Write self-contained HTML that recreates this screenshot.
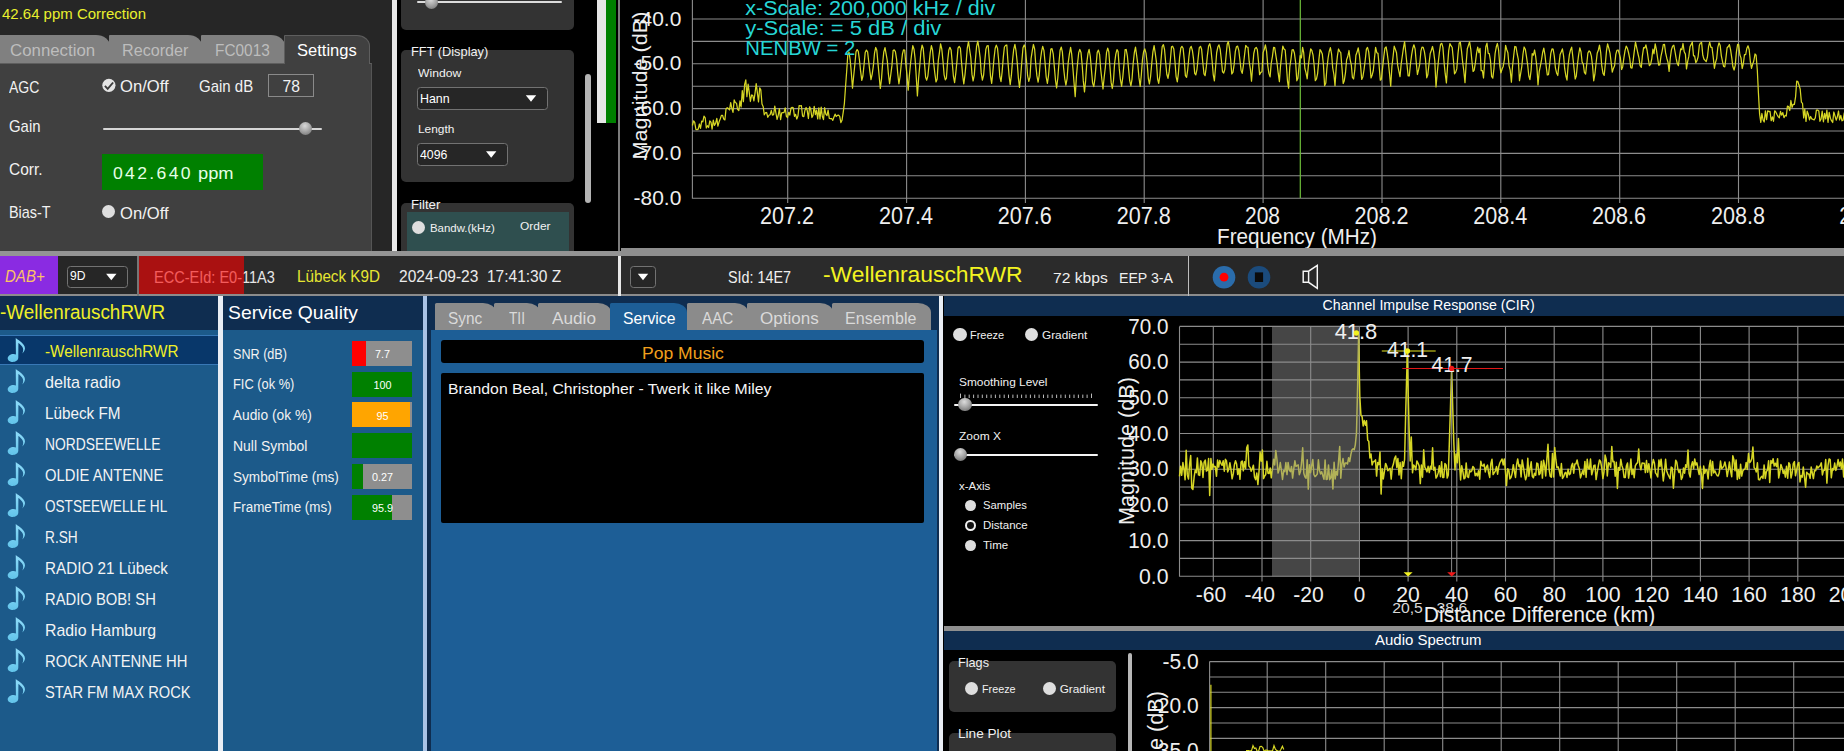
<!DOCTYPE html>
<html lang="en"><head><meta charset="utf-8"><title>DAB Receiver</title>
<style>
html,body{margin:0;padding:0;background:#000;overflow:hidden;}
html{width:1844px;height:751px;}
body{width:1844px;height:751px;position:relative;overflow:hidden;font-family:"Liberation Sans",sans-serif;}
.b{position:absolute;box-sizing:border-box;}
.t{position:absolute;white-space:nowrap;line-height:1;transform-origin:0 0;display:block;}
svg{position:absolute;left:0;top:0;overflow:hidden;}
svg text{font-family:"Liberation Sans",sans-serif;}
.rd{position:absolute;border-radius:50%;background:#dedede;}
.tab{position:absolute;box-sizing:border-box;}
</style></head><body>
<div class="b" style="left:0.00px;top:0.00px;width:392.30px;height:251.00px;background:#262626;"></div>
<span class="t" style="left:2.00px;top:6.77px;font-size:14.8px;color:#e9f02e;transform:scaleX(1.0118);">42.64 ppm Correction</span>
<div class="tab" style="left:-4px;top:35px;width:113.9px;height:28px;background:#808080;border-radius:1px 14px 0 0 / 1px 11px 0 0;"></div>
<div class="tab" style="left:108.7px;top:35px;width:93.3px;height:28px;background:#808080;border-radius:1px 14px 0 0 / 1px 11px 0 0;"></div>
<div class="tab" style="left:200.8px;top:35px;width:84.4px;height:28px;background:#808080;border-radius:1px 14px 0 0 / 1px 11px 0 0;"></div>
<div class="b" style="left:0.00px;top:63.00px;width:372.00px;height:188.00px;background:#404040;border-top:1px solid #5e5e5e;border-right:1px solid #555;"></div>
<div class="tab" style="left:284px;top:35px;width:86px;height:29px;background:#404040;border:1px solid #5e5e5e;border-bottom:none;border-radius:1px 13px 0 0 / 1px 11px 0 0;"></div>
<span class="t" style="left:9.80px;top:43.35px;font-size:16.6px;color:#bdbdbd;transform:scaleX(1.0145);">Connection</span>
<span class="t" style="left:121.90px;top:43.35px;font-size:16.6px;color:#bdbdbd;transform:scaleX(0.9726);">Recorder</span>
<span class="t" style="left:214.80px;top:43.35px;font-size:16.6px;color:#bdbdbd;transform:scaleX(0.9279);">FC0013</span>
<span class="t" style="left:296.50px;top:43.35px;font-size:16.6px;color:#fff;transform:scaleX(0.9953);">Settings</span>
<span class="t" style="left:8.70px;top:80.21px;font-size:15.7px;color:#f2f2f2;transform:scaleX(0.8935);">AGC</span>
<svg width="130" height="110" viewBox="0 0 130 110"><circle cx="108.9" cy="85.3" r="6.6" fill="#e4e4e4"/><path d="M104.9 85.9 L107.7 88.9 L113.1 82.5" fill="none" stroke="#3c3c3c" stroke-width="1.9"/></svg>
<span class="t" style="left:120.20px;top:78.91px;font-size:15.7px;color:#f2f2f2;transform:scaleX(1.0574);">On/Off</span>
<span class="t" style="left:198.50px;top:78.91px;font-size:15.7px;color:#f2f2f2;transform:scaleX(0.9554);">Gain dB</span>
<div class="b" style="left:268.30px;top:74.20px;width:45.60px;height:23.00px;background:#404040;border:1px solid #8a8a8a;"></div>
<span class="t" style="left:282.47px;top:78.91px;font-size:15.7px;color:#f2f2f2;">78</span>
<span class="t" style="left:8.70px;top:119.41px;font-size:15.7px;color:#f2f2f2;transform:scaleX(0.9498);">Gain</span>
<div class="b" style="left:103.00px;top:127.70px;width:219.00px;height:2.10px;background:#d6d6d6;border-radius:1px;"></div>
<div class="b" style="left:299.4px;top:122.2px;width:13px;height:13px;border-radius:50%;background:radial-gradient(circle at 45% 30%,#d8d8d8 0%,#a8a8a8 45%,#6a6a6a 100%);"></div>
<span class="t" style="left:8.70px;top:161.61px;font-size:15.7px;color:#f2f2f2;transform:scaleX(0.9876);">Corr.</span>
<div class="b" style="left:102.00px;top:153.80px;width:161.10px;height:35.80px;background:#008000;"></div>
<span class="t" style="left:113.30px;top:164.87px;font-size:17.4px;color:#e6ffe6;transform:scaleX(1.0114);letter-spacing:2.3px;">042.640</span>
<span class="t" style="left:198.30px;top:164.87px;font-size:17.4px;color:#e6ffe6;transform:scaleX(1.0517);">ppm</span>
<span class="t" style="left:8.70px;top:204.61px;font-size:15.7px;color:#f2f2f2;transform:scaleX(0.9171);">Bias-T</span>
<div class="rd" style="left:102px;top:205.2px;width:13px;height:13px;"></div>
<span class="t" style="left:120.20px;top:206.01px;font-size:15.7px;color:#f2f2f2;transform:scaleX(1.0574);">On/Off</span>
<div class="b" style="left:392.30px;top:0.00px;width:4.70px;height:251.00px;background:#e8e8e8;"></div>
<div class="b" style="left:397.00px;top:0.00px;width:221.20px;height:251.00px;background:#000;"></div>
<div class="b" style="left:401.30px;top:-6.00px;width:173.00px;height:35.60px;background:#333333;border-radius:5px;"></div>
<div class="b" style="left:417.00px;top:1.20px;width:145.00px;height:2.00px;background:#dcdcdc;border-radius:1px;"></div>
<div class="b" style="left:424.5px;top:-4.5px;width:13px;height:13px;border-radius:50%;background:radial-gradient(circle at 45% 30%,#d8d8d8 0%,#a8a8a8 45%,#6a6a6a 100%);"></div>
<div class="b" style="left:401.30px;top:50.00px;width:173.00px;height:132.00px;background:#333333;border-radius:5px;"></div>
<span class="t" style="left:411.00px;top:46.26px;font-size:12.8px;color:#f2f2f2;">FFT (Display)</span>
<span class="t" style="left:417.70px;top:68.21px;font-size:11.8px;color:#f2f2f2;transform:scaleX(1.0317);">Window</span>
<div class="b" style="left:417.20px;top:87.00px;width:130.80px;height:22.90px;background:#262626;border:1.2px solid #727272;border-radius:3.5px;"></div>
<span class="t" style="left:420.00px;top:92.51px;font-size:12.8px;color:#fff;transform:scaleX(0.9673);">Hann</span>
<svg width="1844" height="751" style="pointer-events:none"><path d="M525.8 95.14999999999999 L536.2 95.14999999999999 L531 101.74999999999999 Z" fill="#fff"/></svg>
<span class="t" style="left:417.90px;top:124.31px;font-size:11.8px;color:#f2f2f2;transform:scaleX(1.0085);">Length</span>
<div class="b" style="left:417.20px;top:143.00px;width:90.80px;height:23.00px;background:#262626;border:1.2px solid #727272;border-radius:3.5px;"></div>
<span class="t" style="left:420.00px;top:148.56px;font-size:12.8px;color:#fff;transform:scaleX(0.9622);">4096</span>
<svg width="1844" height="751" style="pointer-events:none"><path d="M486.0 151.2 L496.4 151.2 L491.2 157.8 Z" fill="#fff"/></svg>
<div class="b" style="left:401.30px;top:202.80px;width:173.00px;height:48.20px;background:#333333;border-radius:5px 5px 0 0;"></div>
<span class="t" style="left:411.00px;top:198.56px;font-size:12.8px;color:#f2f2f2;transform:scaleX(1.0301);">Filter</span>
<div class="b" style="left:407.00px;top:212.20px;width:161.50px;height:38.80px;background:#2f4f4f;"></div>
<div class="rd" style="left:412.4px;top:220.7px;width:13px;height:13px;"></div>
<span class="t" style="left:429.90px;top:222.51px;font-size:11.8px;color:#f2f2f2;transform:scaleX(0.9688);">Bandw.(kHz)</span>
<span class="t" style="left:520.30px;top:221.01px;font-size:11.8px;color:#f2f2f2;transform:scaleX(1.0112);">Order</span>
<div class="b" style="left:585.40px;top:74.40px;width:5.20px;height:128.40px;background:#b4b4b4;border-radius:3px;"></div>
<div class="b" style="left:596.60px;top:0.00px;width:9.80px;height:123.20px;background:#e6e6e6;"></div>
<div class="b" style="left:606.40px;top:0.00px;width:10.10px;height:123.20px;background:#008000;"></div>
<div class="b" style="left:618.20px;top:0.00px;width:2.00px;height:251.00px;background:#7c7c7c;"></div>
<svg width="1844" height="248" viewBox="0 0 1844 248" style="left:0;top:0">
<rect x="620.2" y="0" width="1224" height="248" fill="#000"/>
<path d="M692.4 198.2H1844 M692.4 175.8H1844 M692.4 153.4H1844 M692.4 131.0H1844 M692.4 108.6H1844 M692.4 86.2H1844 M692.4 63.8H1844 M692.4 41.4H1844 M692.4 19.0H1844 M787.7 0V203 M906.6 0V203 M1025.4 0V203 M1144.2 0V203 M1263.1 0V203 M1382.0 0V203 M1500.8 0V203 M1619.7 0V203 M1738.5 0V203 M692.4 0V198.7" stroke="#8c8c8c" stroke-width="1.1" fill="none"/>
<path d="M1300.3 0V198" stroke="#6fbf3a" stroke-width="1.2"/>
<path d="M692.4 125.5 L693.6 120.8 L694.7 122.4 L695.9 129.3 L697.0 129.6 L698.2 129.1 L699.4 124.0 L700.5 128.3 L701.7 121.1 L702.8 121.8 L704.0 116.1 L705.2 117.8 L706.3 128.0 L707.5 125.7 L708.6 127.5 L709.8 120.9 L711.0 122.2 L712.1 129.2 L713.3 120.2 L714.4 125.4 L715.6 123.4 L716.8 118.3 L717.9 126.1 L719.1 121.8 L720.2 119.0 L721.4 115.4 L722.6 115.3 L723.7 119.1 L724.9 119.9 L726.0 109.1 L727.2 107.7 L728.4 108.6 L729.5 109.9 L730.7 102.6 L731.8 108.2 L733.0 112.4 L734.2 99.9 L735.3 102.5 L736.5 103.2 L737.6 109.3 L738.8 110.6 L740.0 100.9 L741.1 107.0 L742.3 90.6 L743.4 101.6 L744.6 84.7 L745.8 79.9 L746.9 96.6 L748.1 84.2 L749.2 92.2 L750.4 101.5 L751.6 95.0 L752.7 95.4 L753.9 100.9 L755.0 93.4 L756.2 83.7 L757.4 92.8 L758.5 101.9 L759.7 87.9 L760.8 89.9 L762.0 104.0 L763.2 106.7 L764.3 114.8 L765.5 112.7 L766.6 112.5 L767.8 117.3 L769.0 115.3 L770.1 114.8 L771.3 110.3 L772.4 115.2 L773.6 114.7 L774.8 106.1 L775.9 113.0 L777.1 119.3 L778.2 115.5 L779.4 108.6 L780.6 119.7 L781.7 112.9 L782.9 112.7 L784.0 112.6 L785.2 107.8 L786.4 116.4 L787.5 117.6 L788.7 112.3 L789.8 115.1 L791.0 108.1 L792.2 107.4 L793.3 107.8 L794.5 116.3 L795.6 114.4 L796.8 119.0 L798.0 115.7 L799.1 105.6 L800.3 105.9 L801.4 105.7 L802.6 116.2 L803.8 116.6 L804.9 110.5 L806.1 107.5 L807.2 110.3 L808.4 118.5 L809.6 106.8 L810.7 109.2 L811.9 117.5 L813.0 115.4 L814.2 106.4 L815.4 114.7 L816.5 110.2 L817.7 118.9 L818.8 107.9 L820.0 119.0 L821.2 107.1 L822.3 116.3 L823.5 119.6 L824.6 107.7 L825.8 114.2 L827.0 115.6 L828.1 110.1 L829.3 118.4 L830.4 118.7 L831.6 118.5 L832.8 120.4 L833.9 117.3 L835.1 114.1 L836.2 116.5 L837.4 115.4 L838.6 115.1 L839.7 116.3 L840.9 122.6 L842.0 120.3 L843.2 112.4 L844.4 103.3 L845.5 87.2 L846.7 71.0 L847.8 54.8 L849.0 52.2 L850.2 60.2 L851.3 72.2 L852.5 88.2 L853.6 76.7 L854.8 65.0 L856.0 51.8 L857.1 49.6 L858.3 51.3 L859.4 59.5 L860.6 71.1 L861.8 80.4 L862.9 76.0 L864.1 64.2 L865.2 52.5 L866.4 50.1 L867.6 51.8 L868.7 61.5 L869.9 71.6 L871.0 79.7 L872.2 74.1 L873.4 65.7 L874.5 53.2 L875.7 47.5 L876.8 50.2 L878.0 63.6 L879.2 76.5 L880.3 88.5 L881.5 79.1 L882.6 63.6 L883.8 51.9 L885.0 47.6 L886.1 53.8 L887.3 60.6 L888.4 74.0 L889.6 83.6 L890.8 74.5 L891.9 65.9 L893.1 50.6 L894.2 49.9 L895.4 51.7 L896.6 59.1 L897.7 73.3 L898.9 83.8 L900.0 77.0 L901.2 65.0 L902.4 54.2 L903.5 49.8 L904.7 50.0 L905.8 64.2 L907.0 74.9 L908.2 90.2 L909.3 76.4 L910.5 63.7 L911.6 54.3 L912.8 45.6 L914.0 49.1 L915.1 58.8 L916.3 77.4 L917.4 95.9 L918.6 78.2 L919.8 65.3 L920.9 51.7 L922.1 45.2 L923.2 48.3 L924.4 62.4 L925.6 77.2 L926.7 80.2 L927.9 75.8 L929.0 65.0 L930.2 52.9 L931.4 45.6 L932.5 49.8 L933.7 63.1 L934.8 73.0 L936.0 81.9 L937.2 79.0 L938.3 60.4 L939.5 52.1 L940.6 43.9 L941.8 49.0 L943.0 61.3 L944.1 74.8 L945.3 79.9 L946.4 78.1 L947.6 61.3 L948.8 50.3 L949.9 47.3 L951.1 49.9 L952.2 62.3 L953.4 76.2 L954.6 82.7 L955.7 74.0 L956.9 61.9 L958.0 48.2 L959.2 46.3 L960.4 48.4 L961.5 62.0 L962.7 75.6 L963.8 83.8 L965.0 74.6 L966.2 61.8 L967.3 47.8 L968.5 41.7 L969.6 49.3 L970.8 57.5 L972.0 74.4 L973.1 81.0 L974.3 75.1 L975.4 59.7 L976.6 46.3 L977.8 41.2 L978.9 47.8 L980.1 57.3 L981.2 72.9 L982.4 80.2 L983.6 75.2 L984.7 61.9 L985.9 49.1 L987.0 45.9 L988.2 45.7 L989.4 60.6 L990.5 76.1 L991.7 83.3 L992.8 72.4 L994.0 58.5 L995.2 48.3 L996.3 45.1 L997.5 48.3 L998.6 59.8 L999.8 76.5 L1001.0 81.7 L1002.1 72.2 L1003.3 57.1 L1004.4 47.0 L1005.6 45.4 L1006.8 45.0 L1007.9 61.1 L1009.1 76.0 L1010.2 84.6 L1011.4 75.2 L1012.6 59.9 L1013.7 49.3 L1014.9 44.4 L1016.0 50.7 L1017.2 62.1 L1018.4 78.2 L1019.5 87.4 L1020.7 76.7 L1021.8 61.9 L1023.0 47.7 L1024.2 44.9 L1025.3 47.4 L1026.5 60.8 L1027.6 75.7 L1028.8 81.4 L1030.0 77.2 L1031.1 58.4 L1032.3 50.7 L1033.4 44.5 L1034.6 48.8 L1035.8 65.0 L1036.9 75.9 L1038.1 82.1 L1039.2 75.7 L1040.4 60.0 L1041.6 51.4 L1042.7 46.4 L1043.9 50.4 L1045.0 61.7 L1046.2 77.1 L1047.4 83.3 L1048.5 75.6 L1049.7 61.4 L1050.8 49.2 L1052.0 48.7 L1053.2 53.8 L1054.3 66.4 L1055.5 80.3 L1056.6 88.0 L1057.8 78.0 L1059.0 62.3 L1060.1 50.2 L1061.3 47.1 L1062.4 52.2 L1063.6 67.9 L1064.8 78.8 L1065.9 85.2 L1067.1 78.7 L1068.2 62.7 L1069.4 53.9 L1070.6 47.4 L1071.7 54.2 L1072.9 68.3 L1074.0 82.3 L1075.2 96.7 L1076.4 76.8 L1077.5 64.0 L1078.7 52.7 L1079.8 49.4 L1081.0 52.4 L1082.2 65.2 L1083.3 80.9 L1084.5 91.9 L1085.6 80.9 L1086.8 62.9 L1088.0 53.4 L1089.1 49.3 L1090.3 56.5 L1091.4 69.4 L1092.6 83.1 L1093.8 86.6 L1094.9 78.6 L1096.1 65.4 L1097.2 52.5 L1098.4 50.1 L1099.6 54.3 L1100.7 69.3 L1101.9 79.8 L1103.0 89.0 L1104.2 77.0 L1105.4 66.7 L1106.5 52.7 L1107.7 48.2 L1108.8 51.6 L1110.0 67.5 L1111.2 82.9 L1112.3 88.5 L1113.5 80.5 L1114.6 63.3 L1115.8 54.2 L1117.0 49.6 L1118.1 51.6 L1119.3 68.9 L1120.4 79.5 L1121.6 86.3 L1122.8 77.1 L1123.9 64.6 L1125.1 49.7 L1126.2 49.5 L1127.4 56.2 L1128.6 69.2 L1129.7 80.7 L1130.9 85.8 L1132.0 79.3 L1133.2 63.2 L1134.4 52.3 L1135.5 47.1 L1136.7 55.8 L1137.8 64.5 L1139.0 77.9 L1140.2 86.5 L1141.3 75.2 L1142.5 59.3 L1143.6 51.7 L1144.8 48.9 L1146.0 53.1 L1147.1 62.5 L1148.3 78.3 L1149.4 84.0 L1150.6 76.3 L1151.8 62.9 L1152.9 51.9 L1154.1 45.7 L1155.2 52.9 L1156.4 61.9 L1157.6 79.0 L1158.7 83.3 L1159.9 75.5 L1161.0 60.1 L1162.2 46.5 L1163.4 44.7 L1164.5 49.3 L1165.7 62.7 L1166.8 74.3 L1168.0 78.3 L1169.2 71.4 L1170.3 60.8 L1171.5 46.8 L1172.6 46.2 L1173.8 48.9 L1175.0 61.7 L1176.1 76.6 L1177.3 81.8 L1178.4 73.3 L1179.6 57.4 L1180.8 48.1 L1181.9 46.3 L1183.1 48.3 L1184.2 59.1 L1185.4 75.6 L1186.6 77.3 L1187.7 69.8 L1188.9 56.9 L1190.0 48.3 L1191.2 46.4 L1192.4 50.5 L1193.5 58.7 L1194.7 73.4 L1195.8 74.9 L1197.0 69.3 L1198.2 57.5 L1199.3 47.6 L1200.5 46.3 L1201.6 49.3 L1202.8 62.5 L1204.0 74.0 L1205.1 75.7 L1206.3 66.9 L1207.4 55.3 L1208.6 46.0 L1209.8 43.7 L1210.9 48.9 L1212.1 60.8 L1213.2 74.3 L1214.4 80.8 L1215.6 66.8 L1216.7 52.5 L1217.9 46.8 L1219.0 44.9 L1220.2 49.5 L1221.4 60.2 L1222.5 71.8 L1223.7 73.0 L1224.8 69.6 L1226.0 56.7 L1227.2 44.2 L1228.3 41.6 L1229.5 48.3 L1230.6 59.2 L1231.8 74.0 L1233.0 72.2 L1234.1 64.9 L1235.3 51.6 L1236.4 46.8 L1237.6 46.1 L1238.8 50.4 L1239.9 59.8 L1241.1 70.4 L1242.2 73.3 L1243.4 65.3 L1244.6 54.5 L1245.7 45.5 L1246.9 47.0 L1248.0 47.4 L1249.2 61.7 L1250.4 69.3 L1251.5 81.2 L1252.7 66.2 L1253.8 53.5 L1255.0 48.4 L1256.2 47.4 L1257.3 49.5 L1258.5 61.6 L1259.6 74.6 L1260.8 72.4 L1262.0 71.7 L1263.1 52.6 L1264.3 49.3 L1265.4 44.8 L1266.6 51.6 L1267.8 66.0 L1268.9 73.4 L1270.1 76.9 L1271.2 63.5 L1272.4 56.7 L1273.6 47.4 L1274.7 47.6 L1275.9 55.7 L1277.0 62.7 L1278.2 73.2 L1279.4 81.6 L1280.5 66.1 L1281.7 55.0 L1282.8 46.1 L1284.0 49.0 L1285.2 50.0 L1286.3 63.7 L1287.5 81.2 L1288.6 88.2 L1289.8 67.0 L1291.0 58.9 L1292.1 49.8 L1293.3 49.7 L1294.4 53.0 L1295.6 62.1 L1296.8 80.8 L1297.9 78.2 L1299.1 66.1 L1300.2 55.6 L1301.4 57.9 L1302.6 47.4 L1303.7 52.7 L1304.9 68.7 L1306.0 72.6 L1307.2 78.8 L1308.4 65.2 L1309.5 56.6 L1310.7 48.8 L1311.8 50.3 L1313.0 54.8 L1314.2 65.7 L1315.3 80.6 L1316.5 78.8 L1317.6 73.6 L1318.8 60.4 L1320.0 49.6 L1321.1 51.2 L1322.3 53.9 L1323.4 64.2 L1324.6 85.7 L1325.8 83.1 L1326.9 68.5 L1328.1 58.0 L1329.2 51.5 L1330.4 47.7 L1331.6 54.0 L1332.7 68.0 L1333.9 74.5 L1335.0 85.6 L1336.2 67.7 L1337.4 56.1 L1338.5 49.0 L1339.7 51.4 L1340.8 52.7 L1342.0 68.2 L1343.2 83.5 L1344.3 80.7 L1345.5 72.7 L1346.6 59.8 L1347.8 56.5 L1349.0 50.5 L1350.1 59.3 L1351.3 64.8 L1352.4 77.3 L1353.6 79.0 L1354.8 70.2 L1355.9 55.2 L1357.1 52.1 L1358.2 47.8 L1359.4 54.9 L1360.6 66.1 L1361.7 79.4 L1362.9 76.7 L1364.0 70.0 L1365.2 60.3 L1366.4 49.1 L1367.5 47.4 L1368.7 51.9 L1369.8 62.7 L1371.0 77.9 L1372.2 74.9 L1373.3 70.5 L1374.5 58.1 L1375.6 47.4 L1376.8 52.7 L1378.0 53.4 L1379.1 65.5 L1380.3 80.2 L1381.4 79.1 L1382.6 67.6 L1383.8 56.9 L1384.9 48.1 L1386.1 46.9 L1387.2 53.2 L1388.4 62.5 L1389.6 74.5 L1390.7 86.2 L1391.9 66.8 L1393.0 57.3 L1394.2 46.2 L1395.4 49.4 L1396.5 52.8 L1397.7 65.4 L1398.8 71.0 L1400.0 76.6 L1401.2 63.8 L1402.3 56.0 L1403.5 47.7 L1404.6 41.6 L1405.8 52.7 L1407.0 64.8 L1408.1 75.8 L1409.3 75.9 L1410.4 64.5 L1411.6 55.1 L1412.8 48.2 L1413.9 44.8 L1415.1 48.9 L1416.2 61.9 L1417.4 74.5 L1418.6 69.7 L1419.7 64.3 L1420.9 51.2 L1422.0 47.2 L1423.2 47.3 L1424.4 51.7 L1425.5 59.2 L1426.7 77.8 L1427.8 74.8 L1429.0 64.0 L1430.2 53.5 L1431.3 50.5 L1432.5 46.5 L1433.6 51.4 L1434.8 60.9 L1436.0 86.9 L1437.1 74.6 L1438.3 62.0 L1439.4 52.4 L1440.6 44.2 L1441.8 43.3 L1442.9 47.3 L1444.1 62.6 L1445.2 73.7 L1446.4 82.9 L1447.6 65.6 L1448.7 50.6 L1449.9 43.6 L1451.0 45.7 L1452.2 47.5 L1453.4 59.7 L1454.5 73.8 L1455.7 72.1 L1456.8 68.9 L1458.0 53.6 L1459.2 43.0 L1460.3 42.2 L1461.5 51.0 L1462.6 61.7 L1463.8 71.0 L1465.0 82.7 L1466.1 64.4 L1467.3 48.8 L1468.4 45.5 L1469.6 41.8 L1470.8 49.4 L1471.9 60.7 L1473.1 71.5 L1474.2 70.1 L1475.4 62.7 L1476.6 53.0 L1477.7 47.2 L1478.9 52.6 L1480.0 48.3 L1481.2 70.7 L1482.4 70.7 L1483.5 78.0 L1484.7 61.6 L1485.8 46.8 L1487.0 43.2 L1488.2 53.3 L1489.3 53.7 L1490.5 60.9 L1491.6 76.4 L1492.8 78.2 L1494.0 68.3 L1495.1 53.5 L1496.3 46.8 L1497.4 43.5 L1498.6 50.0 L1499.8 65.8 L1500.9 72.9 L1502.1 69.0 L1503.2 66.4 L1504.4 59.5 L1505.6 45.4 L1506.7 49.5 L1507.9 52.7 L1509.0 65.6 L1510.2 70.1 L1511.4 82.2 L1512.5 66.7 L1513.7 55.8 L1514.8 46.5 L1516.0 46.9 L1517.2 54.0 L1518.3 59.3 L1519.5 80.7 L1520.6 73.8 L1521.8 66.5 L1523.0 54.0 L1524.1 47.0 L1525.3 49.2 L1526.4 56.1 L1527.6 64.3 L1528.8 75.8 L1529.9 79.6 L1531.1 70.5 L1532.2 53.6 L1533.4 55.1 L1534.6 50.0 L1535.7 56.7 L1536.9 67.3 L1538.0 84.9 L1539.2 71.7 L1540.4 65.8 L1541.5 59.9 L1542.7 52.1 L1543.8 48.1 L1545.0 55.4 L1546.2 66.4 L1547.3 75.0 L1548.5 74.7 L1549.6 65.0 L1550.8 53.4 L1552.0 48.9 L1553.1 49.1 L1554.3 56.0 L1555.4 67.8 L1556.6 72.9 L1557.8 75.5 L1558.9 65.1 L1560.1 54.6 L1561.2 51.9 L1562.4 48.9 L1563.6 56.0 L1564.7 68.7 L1565.9 76.0 L1567.0 80.2 L1568.2 64.3 L1569.4 54.7 L1570.5 50.1 L1571.7 47.2 L1572.8 56.5 L1574.0 68.0 L1575.2 79.0 L1576.3 76.0 L1577.5 64.0 L1578.6 55.0 L1579.8 47.8 L1581.0 51.8 L1582.1 62.0 L1583.3 64.1 L1584.4 72.4 L1585.6 74.1 L1586.8 63.7 L1587.9 53.0 L1589.1 50.9 L1590.2 52.0 L1591.4 56.1 L1592.6 66.3 L1593.7 80.8 L1594.9 74.2 L1596.0 63.7 L1597.2 53.3 L1598.4 50.0 L1599.5 45.1 L1600.7 52.6 L1601.8 66.2 L1603.0 73.4 L1604.2 75.4 L1605.3 64.1 L1606.5 50.8 L1607.6 43.9 L1608.8 48.2 L1610.0 53.2 L1611.1 61.9 L1612.3 72.1 L1613.4 68.4 L1614.6 65.8 L1615.8 54.4 L1616.9 50.3 L1618.1 50.0 L1619.2 53.4 L1620.4 58.0 L1621.6 69.5 L1622.7 66.7 L1623.9 57.9 L1625.0 50.9 L1626.2 46.1 L1627.4 48.3 L1628.5 52.5 L1629.7 58.3 L1630.8 67.6 L1632.0 68.1 L1633.2 60.2 L1634.3 51.1 L1635.5 42.1 L1636.6 47.1 L1637.8 53.0 L1639.0 58.2 L1640.1 65.7 L1641.3 67.4 L1642.4 55.8 L1643.6 47.7 L1644.8 48.0 L1645.9 44.9 L1647.1 50.5 L1648.2 58.3 L1649.4 65.7 L1650.6 64.3 L1651.7 59.2 L1652.9 49.2 L1654.0 53.8 L1655.2 43.8 L1656.4 49.6 L1657.5 57.5 L1658.7 65.2 L1659.8 64.9 L1661.0 56.1 L1662.2 50.8 L1663.3 44.6 L1664.5 44.3 L1665.6 52.9 L1666.8 58.2 L1668.0 62.3 L1669.1 71.4 L1670.3 58.1 L1671.4 49.9 L1672.6 46.2 L1673.8 45.2 L1674.9 51.0 L1676.1 58.2 L1677.2 63.3 L1678.4 65.6 L1679.6 56.1 L1680.7 48.9 L1681.9 49.6 L1683.0 43.5 L1684.2 51.8 L1685.4 54.1 L1686.5 68.9 L1687.7 61.4 L1688.8 56.4 L1690.0 46.8 L1691.2 44.4 L1692.3 42.0 L1693.5 55.8 L1694.6 55.8 L1695.8 62.6 L1697.0 60.6 L1698.1 56.8 L1699.3 45.6 L1700.4 43.0 L1701.6 42.5 L1702.8 55.2 L1703.9 59.0 L1705.1 60.4 L1706.2 61.7 L1707.4 57.2 L1708.6 46.3 L1709.7 42.2 L1710.9 47.3 L1712.0 47.3 L1713.2 56.9 L1714.4 68.3 L1715.5 62.5 L1716.7 58.6 L1717.8 47.4 L1719.0 42.8 L1720.2 45.5 L1721.3 55.6 L1722.5 61.5 L1723.6 66.4 L1724.8 66.8 L1726.0 57.4 L1727.1 47.7 L1728.3 46.5 L1729.4 44.6 L1730.6 49.9 L1731.8 58.2 L1732.9 66.8 L1734.1 70.0 L1735.2 65.4 L1736.4 52.1 L1737.6 44.4 L1738.7 44.7 L1739.9 55.0 L1741.0 57.9 L1742.2 68.5 L1743.4 63.3 L1744.5 54.5 L1745.7 54.5 L1746.8 48.5 L1748.0 45.8 L1749.2 49.7 L1750.3 61.1 L1751.5 68.4 L1752.6 64.4 L1753.8 61.0 L1755.0 54.0 L1756.1 55.2 L1757.3 70.0 L1758.4 92.5 L1759.6 114.0 L1760.8 122.3 L1761.9 113.5 L1763.1 120.0 L1764.2 122.0 L1765.4 110.9 L1766.6 119.7 L1767.7 110.8 L1768.9 111.6 L1770.0 111.3 L1771.2 120.7 L1772.4 116.9 L1773.5 121.3 L1774.7 110.8 L1775.8 111.9 L1777.0 114.5 L1778.2 116.6 L1779.3 117.8 L1780.5 111.4 L1781.6 115.2 L1782.8 112.6 L1784.0 117.7 L1785.1 115.4 L1786.3 116.0 L1787.4 106.2 L1788.6 106.7 L1789.8 110.5 L1790.9 100.5 L1792.1 107.4 L1793.2 104.3 L1794.4 104.3 L1795.6 96.6 L1796.7 81.2 L1797.9 81.7 L1799.0 85.0 L1800.2 89.2 L1801.4 102.1 L1802.5 103.3 L1803.7 118.0 L1804.8 109.2 L1806.0 121.4 L1807.2 111.1 L1808.3 114.1 L1809.5 119.8 L1810.6 116.5 L1811.8 118.9 L1813.0 119.3 L1814.1 120.0 L1815.3 117.9 L1816.4 110.1 L1817.6 110.0 L1818.8 110.9 L1819.9 121.3 L1821.1 118.9 L1822.2 111.2 L1823.4 121.8 L1824.6 113.4 L1825.7 118.8 L1826.9 110.2 L1828.0 122.3 L1829.2 112.4 L1830.4 118.2 L1831.5 120.7 L1832.7 122.5 L1833.8 112.0 L1835.0 115.9 L1836.2 120.2 L1837.3 117.0 L1838.5 111.0 L1839.6 119.8 L1840.8 115.3 L1842.0 120.8 L1843.1 120.2 L1844.3 112.8 L1845.4 113.6" stroke="#d6d625" stroke-width="1.25" fill="none" stroke-linejoin="round"/>
<text x="681.3" y="204.8" font-size="21" fill="#efefef" text-anchor="end" textLength="47.8" lengthAdjust="spacingAndGlyphs">-80.0</text>
<text x="681.3" y="160.0" font-size="21" fill="#efefef" text-anchor="end" textLength="47.8" lengthAdjust="spacingAndGlyphs">-70.0</text>
<text x="681.3" y="115.2" font-size="21" fill="#efefef" text-anchor="end" textLength="47.8" lengthAdjust="spacingAndGlyphs">-60.0</text>
<text x="681.3" y="70.4" font-size="21" fill="#efefef" text-anchor="end" textLength="47.8" lengthAdjust="spacingAndGlyphs">-50.0</text>
<text x="681.3" y="25.6" font-size="21" fill="#efefef" text-anchor="end" textLength="47.8" lengthAdjust="spacingAndGlyphs">-40.0</text>
<text x="787.1" y="224.2" font-size="23" fill="#efefef" text-anchor="middle" textLength="54.0" lengthAdjust="spacingAndGlyphs">207.2</text>
<text x="906.0" y="224.2" font-size="23" fill="#efefef" text-anchor="middle" textLength="54.0" lengthAdjust="spacingAndGlyphs">207.4</text>
<text x="1024.8" y="224.2" font-size="23" fill="#efefef" text-anchor="middle" textLength="54.0" lengthAdjust="spacingAndGlyphs">207.6</text>
<text x="1143.7" y="224.2" font-size="23" fill="#efefef" text-anchor="middle" textLength="54.0" lengthAdjust="spacingAndGlyphs">207.8</text>
<text x="1262.5" y="224.2" font-size="23" fill="#efefef" text-anchor="middle" textLength="35.0" lengthAdjust="spacingAndGlyphs">208</text>
<text x="1381.4" y="224.2" font-size="23" fill="#efefef" text-anchor="middle" textLength="54.0" lengthAdjust="spacingAndGlyphs">208.2</text>
<text x="1500.2" y="224.2" font-size="23" fill="#efefef" text-anchor="middle" textLength="54.0" lengthAdjust="spacingAndGlyphs">208.4</text>
<text x="1619.1" y="224.2" font-size="23" fill="#efefef" text-anchor="middle" textLength="54.0" lengthAdjust="spacingAndGlyphs">208.6</text>
<text x="1737.9" y="224.2" font-size="23" fill="#efefef" text-anchor="middle" textLength="54.0" lengthAdjust="spacingAndGlyphs">208.8</text>
<text x="1856.8" y="224.2" font-size="23" fill="#efefef" text-anchor="middle" textLength="35.0" lengthAdjust="spacingAndGlyphs">209</text>
<text x="1297.0" y="243.9" font-size="22.3" fill="#efefef" text-anchor="middle" textLength="160.0" lengthAdjust="spacingAndGlyphs">Frequency (MHz)</text>
<text transform="translate(647.3,85.5) rotate(-90)" font-size="21" fill="#efefef" text-anchor="middle" textLength="148" lengthAdjust="spacingAndGlyphs">Magnitude (dB)</text>
<text x="745.3" y="15.2" font-size="20" fill="#27d6d6" text-anchor="start" textLength="250.0" lengthAdjust="spacingAndGlyphs">x-Scale: 200,000 kHz / div</text>
<text x="745.3" y="34.9" font-size="20" fill="#27d6d6" text-anchor="start" textLength="196.0" lengthAdjust="spacingAndGlyphs">y-Scale: = 5 dB / div</text>
<text x="745.3" y="54.6" font-size="20" fill="#27d6d6" text-anchor="start" textLength="110.0" lengthAdjust="spacingAndGlyphs">NENBW = 2</text>
</svg>
<div class="b" style="left:0.00px;top:251.00px;width:620.50px;height:5.00px;background:#949494;"></div>
<div class="b" style="left:620.50px;top:248.00px;width:1223.50px;height:8.00px;background:#8e8e8e;"></div>
<div class="b" style="left:0.00px;top:256.00px;width:1844.00px;height:38.20px;background:#2b2b2b;"></div>
<div class="b" style="left:0.00px;top:294.20px;width:1844.00px;height:2.00px;background:#8c8c8c;"></div>
<div class="b" style="left:0.00px;top:256.00px;width:57.70px;height:38.20px;background:#8a2be2;"></div>
<span class="t" style="left:4.60px;top:269.05px;font-size:16.6px;color:#fbc266;transform:scaleX(0.9058);font-style:italic;">DAB+</span>
<div class="b" style="left:57.70px;top:256.00px;width:79.10px;height:38.20px;background:#272727;"></div>
<div class="b" style="left:136.80px;top:256.00px;width:1.80px;height:40.20px;background:#777;"></div>
<div class="b" style="left:67.10px;top:265.80px;width:60.90px;height:22.40px;background:#262626;border:1.2px solid #727272;border-radius:3.5px;"></div>
<span class="t" style="left:69.90px;top:270.06px;font-size:12.8px;color:#fff;transform:scaleX(0.9473);">9D</span>
<svg width="1844" height="751" style="pointer-events:none"><path d="M106.1 273.7 L116.5 273.7 L111.3 280.3 Z" fill="#fff"/></svg>
<span class="t" style="left:154.00px;top:269.71px;font-size:15.7px;color:#e6e6e6;transform:scaleX(0.9265);">ECC-EId: E0-11A3</span>
<div class="b" style="left:138.60px;top:256.00px;width:105.10px;height:38.20px;background:rgba(255,0,0,0.60);"></div>
<span class="t" style="left:296.60px;top:268.91px;font-size:15.7px;color:#e6e632;transform:scaleX(0.9704);">Lübeck K9D</span>
<span class="t" style="left:399.10px;top:268.91px;font-size:15.7px;color:#ececec;transform:scaleX(0.9890);white-space:pre;">2024-09-23  17:41:30 Z</span>
<div class="b" style="left:617.70px;top:256.00px;width:3.00px;height:40.20px;background:#e8e8e8;"></div>
<div class="b" style="left:630.10px;top:265.80px;width:26.10px;height:22.40px;background:#262626;border:1.2px solid #727272;border-radius:3.5px;"></div>
<svg width="1844" height="751" style="pointer-events:none"><path d="M637.8 273.7 L648.2 273.7 L643 280.3 Z" fill="#fff"/></svg>
<span class="t" style="left:727.80px;top:270.01px;font-size:15.7px;color:#f0f0f0;transform:scaleX(0.9136);">SId: 14E7</span>
<span class="t" style="left:823.00px;top:263.64px;font-size:22.4px;color:#f3f321;transform:scaleX(1.0196);">-WellenrauschRWR</span>
<span class="t" style="left:1053.00px;top:270.97px;font-size:14.8px;color:#f0f0f0;transform:scaleX(1.0571);">72 kbps</span>
<span class="t" style="left:1118.90px;top:270.97px;font-size:14.8px;color:#f0f0f0;transform:scaleX(0.9559);">EEP 3-A</span>
<div class="b" style="left:1188.90px;top:256.00px;width:655.10px;height:38.20px;background:#272727;"></div>
<div class="b" style="left:1187.80px;top:256.00px;width:1.10px;height:40.20px;background:#bdbdbd;"></div>
<svg width="1844" height="751" style="pointer-events:none">
<circle cx="1224" cy="277.2" r="11.3" fill="#2a6cab"/><circle cx="1224" cy="277.2" r="4.4" fill="#ff0000"/>
<circle cx="1259" cy="277.2" r="11.3" fill="#1b4b7c"/><rect x="1254.9" y="272.4" width="8.2" height="9.6" fill="#0b0b0b"/>
<path d="M1303.2 271.2 H1308.6 L1317.3 265.3 V288.3 L1308.6 282.3 H1303.2 Z M1308.6 271.2 V282.3" fill="none" stroke="#f6f6f6" stroke-width="1.45" stroke-linejoin="miter"/>
</svg>
<div class="b" style="left:0.00px;top:296.20px;width:217.60px;height:33.70px;background:#0f2d50;"></div>
<div class="b" style="left:0.00px;top:329.90px;width:217.60px;height:421.10px;background:#1c5a8a;"></div>
<span class="t" style="left:0.30px;top:302.61px;font-size:19.6px;color:#f0f028;transform:scaleX(0.9640);">-WellenrauschRWR</span>
<div class="b" style="left:0.00px;top:335.00px;width:217.60px;height:30.00px;background:#08376a;border-top:1px solid #3878b6;border-bottom:1px solid #3878b6;"></div>
<span class="t" style="left:44.80px;top:343.81px;font-size:15.7px;color:#f0f028;transform:scaleX(0.9733);">-WellenrauschRWR</span>
<span class="t" style="left:44.80px;top:374.81px;font-size:15.7px;color:#f4f4f4;transform:scaleX(1.0311);">delta radio</span>
<span class="t" style="left:44.80px;top:405.81px;font-size:15.7px;color:#f4f4f4;transform:scaleX(0.9735);">Lübeck FM</span>
<span class="t" style="left:44.80px;top:436.81px;font-size:15.7px;color:#f4f4f4;transform:scaleX(0.8833);">NORDSEEWELLE</span>
<span class="t" style="left:44.80px;top:467.81px;font-size:15.7px;color:#f4f4f4;transform:scaleX(0.9424);">OLDIE ANTENNE</span>
<span class="t" style="left:44.80px;top:498.81px;font-size:15.7px;color:#f4f4f4;transform:scaleX(0.8652);">OSTSEEWELLE HL</span>
<span class="t" style="left:44.80px;top:529.81px;font-size:15.7px;color:#f4f4f4;transform:scaleX(0.8718);">R.SH</span>
<span class="t" style="left:44.80px;top:560.81px;font-size:15.7px;color:#f4f4f4;transform:scaleX(0.9720);">RADIO 21 Lübeck</span>
<span class="t" style="left:44.80px;top:591.81px;font-size:15.7px;color:#f4f4f4;transform:scaleX(0.9416);">RADIO BOB! SH</span>
<span class="t" style="left:44.80px;top:622.81px;font-size:15.7px;color:#f4f4f4;transform:scaleX(1.0113);">Radio Hamburg</span>
<span class="t" style="left:44.80px;top:653.81px;font-size:15.7px;color:#f4f4f4;transform:scaleX(0.9442);">ROCK ANTENNE HH</span>
<span class="t" style="left:44.80px;top:684.81px;font-size:15.7px;color:#f4f4f4;transform:scaleX(0.9343);">STAR FM MAX ROCK</span>
<svg width="60" height="751" style="pointer-events:none"><defs><linearGradient id="ng" x1="0" y1="0" x2="0" y2="1"><stop offset="0" stop-color="#8fdcfa"/><stop offset="1" stop-color="#62c4ea"/></linearGradient></defs><path transform="translate(0,338)" d="M15.75 0.1 C17.6 1.8 22.6 4.2 24.5 8.2 C25.8 10.9 24.5 13.2 22.4 15.4 C23.5 12.6 23.5 10.4 22.1 8.5 C21 6.9 19.4 5.7 18.4 5.0 L18.3 19.6 C18.3 22.6 15.4 24 12.8 24 C10.1 24 7.7 22.5 7.7 20.3 C7.7 17.8 10.6 15.9 13.5 15.9 C14.5 15.9 15.3 16.1 15.9 16.4 Z" fill="url(#ng)"/><path transform="translate(0,369)" d="M15.75 0.1 C17.6 1.8 22.6 4.2 24.5 8.2 C25.8 10.9 24.5 13.2 22.4 15.4 C23.5 12.6 23.5 10.4 22.1 8.5 C21 6.9 19.4 5.7 18.4 5.0 L18.3 19.6 C18.3 22.6 15.4 24 12.8 24 C10.1 24 7.7 22.5 7.7 20.3 C7.7 17.8 10.6 15.9 13.5 15.9 C14.5 15.9 15.3 16.1 15.9 16.4 Z" fill="url(#ng)"/><path transform="translate(0,400)" d="M15.75 0.1 C17.6 1.8 22.6 4.2 24.5 8.2 C25.8 10.9 24.5 13.2 22.4 15.4 C23.5 12.6 23.5 10.4 22.1 8.5 C21 6.9 19.4 5.7 18.4 5.0 L18.3 19.6 C18.3 22.6 15.4 24 12.8 24 C10.1 24 7.7 22.5 7.7 20.3 C7.7 17.8 10.6 15.9 13.5 15.9 C14.5 15.9 15.3 16.1 15.9 16.4 Z" fill="url(#ng)"/><path transform="translate(0,431)" d="M15.75 0.1 C17.6 1.8 22.6 4.2 24.5 8.2 C25.8 10.9 24.5 13.2 22.4 15.4 C23.5 12.6 23.5 10.4 22.1 8.5 C21 6.9 19.4 5.7 18.4 5.0 L18.3 19.6 C18.3 22.6 15.4 24 12.8 24 C10.1 24 7.7 22.5 7.7 20.3 C7.7 17.8 10.6 15.9 13.5 15.9 C14.5 15.9 15.3 16.1 15.9 16.4 Z" fill="url(#ng)"/><path transform="translate(0,462)" d="M15.75 0.1 C17.6 1.8 22.6 4.2 24.5 8.2 C25.8 10.9 24.5 13.2 22.4 15.4 C23.5 12.6 23.5 10.4 22.1 8.5 C21 6.9 19.4 5.7 18.4 5.0 L18.3 19.6 C18.3 22.6 15.4 24 12.8 24 C10.1 24 7.7 22.5 7.7 20.3 C7.7 17.8 10.6 15.9 13.5 15.9 C14.5 15.9 15.3 16.1 15.9 16.4 Z" fill="url(#ng)"/><path transform="translate(0,493)" d="M15.75 0.1 C17.6 1.8 22.6 4.2 24.5 8.2 C25.8 10.9 24.5 13.2 22.4 15.4 C23.5 12.6 23.5 10.4 22.1 8.5 C21 6.9 19.4 5.7 18.4 5.0 L18.3 19.6 C18.3 22.6 15.4 24 12.8 24 C10.1 24 7.7 22.5 7.7 20.3 C7.7 17.8 10.6 15.9 13.5 15.9 C14.5 15.9 15.3 16.1 15.9 16.4 Z" fill="url(#ng)"/><path transform="translate(0,524)" d="M15.75 0.1 C17.6 1.8 22.6 4.2 24.5 8.2 C25.8 10.9 24.5 13.2 22.4 15.4 C23.5 12.6 23.5 10.4 22.1 8.5 C21 6.9 19.4 5.7 18.4 5.0 L18.3 19.6 C18.3 22.6 15.4 24 12.8 24 C10.1 24 7.7 22.5 7.7 20.3 C7.7 17.8 10.6 15.9 13.5 15.9 C14.5 15.9 15.3 16.1 15.9 16.4 Z" fill="url(#ng)"/><path transform="translate(0,555)" d="M15.75 0.1 C17.6 1.8 22.6 4.2 24.5 8.2 C25.8 10.9 24.5 13.2 22.4 15.4 C23.5 12.6 23.5 10.4 22.1 8.5 C21 6.9 19.4 5.7 18.4 5.0 L18.3 19.6 C18.3 22.6 15.4 24 12.8 24 C10.1 24 7.7 22.5 7.7 20.3 C7.7 17.8 10.6 15.9 13.5 15.9 C14.5 15.9 15.3 16.1 15.9 16.4 Z" fill="url(#ng)"/><path transform="translate(0,586)" d="M15.75 0.1 C17.6 1.8 22.6 4.2 24.5 8.2 C25.8 10.9 24.5 13.2 22.4 15.4 C23.5 12.6 23.5 10.4 22.1 8.5 C21 6.9 19.4 5.7 18.4 5.0 L18.3 19.6 C18.3 22.6 15.4 24 12.8 24 C10.1 24 7.7 22.5 7.7 20.3 C7.7 17.8 10.6 15.9 13.5 15.9 C14.5 15.9 15.3 16.1 15.9 16.4 Z" fill="url(#ng)"/><path transform="translate(0,617)" d="M15.75 0.1 C17.6 1.8 22.6 4.2 24.5 8.2 C25.8 10.9 24.5 13.2 22.4 15.4 C23.5 12.6 23.5 10.4 22.1 8.5 C21 6.9 19.4 5.7 18.4 5.0 L18.3 19.6 C18.3 22.6 15.4 24 12.8 24 C10.1 24 7.7 22.5 7.7 20.3 C7.7 17.8 10.6 15.9 13.5 15.9 C14.5 15.9 15.3 16.1 15.9 16.4 Z" fill="url(#ng)"/><path transform="translate(0,648)" d="M15.75 0.1 C17.6 1.8 22.6 4.2 24.5 8.2 C25.8 10.9 24.5 13.2 22.4 15.4 C23.5 12.6 23.5 10.4 22.1 8.5 C21 6.9 19.4 5.7 18.4 5.0 L18.3 19.6 C18.3 22.6 15.4 24 12.8 24 C10.1 24 7.7 22.5 7.7 20.3 C7.7 17.8 10.6 15.9 13.5 15.9 C14.5 15.9 15.3 16.1 15.9 16.4 Z" fill="url(#ng)"/><path transform="translate(0,679)" d="M15.75 0.1 C17.6 1.8 22.6 4.2 24.5 8.2 C25.8 10.9 24.5 13.2 22.4 15.4 C23.5 12.6 23.5 10.4 22.1 8.5 C21 6.9 19.4 5.7 18.4 5.0 L18.3 19.6 C18.3 22.6 15.4 24 12.8 24 C10.1 24 7.7 22.5 7.7 20.3 C7.7 17.8 10.6 15.9 13.5 15.9 C14.5 15.9 15.3 16.1 15.9 16.4 Z" fill="url(#ng)"/></svg>
<div class="b" style="left:217.60px;top:296.20px;width:5.00px;height:454.80px;background:#e9eef5;"></div>
<div class="b" style="left:222.60px;top:296.20px;width:200.20px;height:33.50px;background:#0f2d50;"></div>
<div class="b" style="left:222.60px;top:329.70px;width:200.20px;height:421.30px;background:#1c5a8a;"></div>
<span class="t" style="left:228.00px;top:303.56px;font-size:18.6px;color:#fff;transform:scaleX(1.0393);">Service Quality</span>
<span class="t" style="left:232.80px;top:347.62px;font-size:13.8px;color:#f2f2f2;transform:scaleX(0.9146);">SNR (dB)</span>
<div class="b" style="left:352.20px;top:340.90px;width:13.40px;height:25.00px;background:#ff0000;"></div>
<div class="b" style="left:365.60px;top:340.90px;width:46.70px;height:25.00px;background:#8e8e8e;"></div>
<span class="t" style="left:374.89px;top:349.06px;font-size:10.8px;color:#fff;">7.7</span>
<span class="t" style="left:232.80px;top:378.37px;font-size:13.8px;color:#f2f2f2;transform:scaleX(0.9312);">FIC (ok %)</span>
<div class="b" style="left:352.20px;top:371.65px;width:60.10px;height:25.00px;background:#008000;"></div>
<span class="t" style="left:373.39px;top:379.81px;font-size:10.8px;color:#fff;">100</span>
<span class="t" style="left:232.80px;top:409.12px;font-size:13.8px;color:#f2f2f2;">Audio (ok %)</span>
<div class="b" style="left:352.20px;top:402.40px;width:58.00px;height:25.00px;background:#ffa500;"></div>
<div class="b" style="left:410.20px;top:402.40px;width:2.10px;height:25.00px;background:#8e8e8e;"></div>
<span class="t" style="left:376.39px;top:410.56px;font-size:10.8px;color:#fff;">95</span>
<span class="t" style="left:232.80px;top:439.87px;font-size:13.8px;color:#f2f2f2;transform:scaleX(1.0105);">Null Symbol</span>
<div class="b" style="left:352.20px;top:433.15px;width:60.10px;height:25.00px;background:#008000;"></div>
<span class="t" style="left:232.80px;top:470.62px;font-size:13.8px;color:#f2f2f2;transform:scaleX(0.9843);">SymbolTime (ms)</span>
<div class="b" style="left:352.20px;top:463.90px;width:11.20px;height:25.00px;background:#008000;"></div>
<div class="b" style="left:363.40px;top:463.90px;width:48.90px;height:25.00px;background:#8e8e8e;"></div>
<span class="t" style="left:371.89px;top:472.06px;font-size:10.8px;color:#fff;">0.27</span>
<span class="t" style="left:232.80px;top:501.37px;font-size:13.8px;color:#f2f2f2;transform:scaleX(0.9729);">FrameTime (ms)</span>
<div class="b" style="left:352.20px;top:494.65px;width:39.50px;height:25.00px;background:#008000;"></div>
<div class="b" style="left:391.70px;top:494.65px;width:20.60px;height:25.00px;background:#8e8e8e;"></div>
<span class="t" style="left:371.89px;top:502.81px;font-size:10.8px;color:#fff;">95.9</span>
<div class="b" style="left:423.40px;top:296.20px;width:3.20px;height:454.80px;background:#a9c3e6;"></div>
<div class="b" style="left:426.80px;top:296.20px;width:512.10px;height:454.80px;background:#0f2d50;"></div>
<div class="b" style="left:431.40px;top:329.80px;width:505.20px;height:421.20px;background:#1d5e96;"></div>
<div class="tab" style="left:434.7px;top:303.1px;width:60.9px;height:26.9px;background:#8b8b8b;border-radius:1.5px 13px 0 0 / 1.5px 9.5px 0 0;z-index:1;"></div>
<div class="tab" style="left:494.4px;top:303.1px;width:45.2px;height:26.9px;background:#8b8b8b;border-radius:1.5px 13px 0 0 / 1.5px 9.5px 0 0;z-index:1;"></div>
<div class="tab" style="left:538.4px;top:303.1px;width:72.3px;height:26.9px;background:#8b8b8b;border-radius:1.5px 13px 0 0 / 1.5px 9.5px 0 0;z-index:1;"></div>
<div class="tab" style="left:609.5px;top:303.1px;width:77.7px;height:26.9px;background:#1d5e96;border-radius:1.5px 13px 0 0 / 1.5px 9.5px 0 0;z-index:3;"></div>
<div class="tab" style="left:687.2px;top:303.1px;width:60.5px;height:26.9px;background:#8b8b8b;border-radius:1.5px 13px 0 0 / 1.5px 9.5px 0 0;z-index:1;"></div>
<div class="tab" style="left:746.5px;top:303.1px;width:86.5px;height:26.9px;background:#8b8b8b;border-radius:1.5px 13px 0 0 / 1.5px 9.5px 0 0;z-index:1;"></div>
<div class="tab" style="left:831.8px;top:303.1px;width:99.6px;height:26.9px;background:#8b8b8b;border-radius:1.5px 13px 0 0 / 1.5px 9.5px 0 0;z-index:1;"></div>
<span class="t" style="left:447.80px;top:311.15px;font-size:16.6px;color:#dadada;transform:scaleX(0.9267);z-index:5;">Sync</span>
<span class="t" style="left:508.80px;top:311.15px;font-size:16.6px;color:#dadada;transform:scaleX(0.8262);z-index:5;">TII</span>
<span class="t" style="left:552.10px;top:311.15px;font-size:16.6px;color:#dadada;transform:scaleX(1.0363);z-index:5;">Audio</span>
<span class="t" style="left:622.70px;top:311.15px;font-size:16.6px;color:#fff;transform:scaleX(0.9466);z-index:5;">Service</span>
<span class="t" style="left:701.70px;top:311.15px;font-size:16.6px;color:#dadada;transform:scaleX(0.9199);z-index:5;">AAC</span>
<span class="t" style="left:759.70px;top:311.15px;font-size:16.6px;color:#dadada;transform:scaleX(1.0278);z-index:5;">Options</span>
<span class="t" style="left:845.20px;top:311.15px;font-size:16.6px;color:#dadada;transform:scaleX(0.9672);z-index:5;">Ensemble</span>
<div class="b" style="left:441.30px;top:339.80px;width:482.90px;height:23.10px;background:#000;border-radius:3px;"></div>
<span class="t" style="left:641.85px;top:345.55px;font-size:16.6px;color:#f2a01c;transform:scaleX(1.0568);">Pop Music</span>
<div class="b" style="left:441.30px;top:373.20px;width:482.90px;height:149.40px;background:#000;border-radius:2px;"></div>
<span class="t" style="left:447.60px;top:381.13px;font-size:15.2px;color:#f6f6f6;transform:scaleX(1.0393);">Brandon Beal, Christopher - Twerk it like Miley</span>
<div class="b" style="left:938.90px;top:296.20px;width:4.60px;height:454.80px;background:#e9eef5;"></div>
<div class="b" style="left:943.50px;top:296.20px;width:900.50px;height:19.50px;background:#0f2d50;"></div>
<div class="b" style="left:943.50px;top:315.70px;width:900.50px;height:310.30px;background:#000;"></div>
<span class="t" style="left:1322.60px;top:298.38px;font-size:14.2px;color:#fff;">Channel Impulse Response (CIR)</span>
<div class="rd" style="left:953.4px;top:327.7px;width:13.2px;height:13.2px;"></div>
<span class="t" style="left:970.40px;top:329.51px;font-size:11.8px;color:#f0f0f0;transform:scaleX(0.9285);">Freeze</span>
<div class="rd" style="left:1024.8px;top:327.7px;width:13.2px;height:13.2px;"></div>
<span class="t" style="left:1042.00px;top:329.51px;font-size:11.8px;color:#f0f0f0;">Gradient</span>
<span class="t" style="left:958.50px;top:377.01px;font-size:11.8px;color:#f0f0f0;transform:scaleX(1.0068);">Smoothing Level</span>
<svg width="1844" height="751" style="pointer-events:none"><path d="M960.5 393.6V398 M964.9 394.6V398 M969.2 394.6V398 M973.6 394.6V398 M978.0 394.6V398 M982.3 394.6V398 M986.7 394.6V398 M991.1 394.6V398 M995.4 394.6V398 M999.8 394.6V398 M1004.2 394.6V398 M1008.5 394.6V398 M1012.9 394.6V398 M1017.3 394.6V398 M1021.6 394.6V398 M1026.0 394.6V398 M1030.4 394.6V398 M1034.7 394.6V398 M1039.1 394.6V398 M1043.5 394.6V398 M1047.8 394.6V398 M1052.2 394.6V398 M1056.6 394.6V398 M1060.9 394.6V398 M1065.3 394.6V398 M1069.7 394.6V398 M1074.0 394.6V398 M1078.4 394.6V398 M1082.8 394.6V398 M1087.1 394.6V398 M1091.5 393.6V398 " stroke="#cfcfcf" stroke-width="0.9"/></svg>
<div class="b" style="left:954.00px;top:403.90px;width:144.00px;height:2.00px;background:#f4f4f4;border-radius:1px;"></div>
<div class="b" style="left:958.4px;top:398.2px;width:13.2px;height:13.2px;border-radius:50%;background:radial-gradient(circle at 45% 30%,#dcdcdc 0%,#a6a6a6 45%,#5c5c5c 100%);"></div>
<span class="t" style="left:958.60px;top:430.91px;font-size:11.8px;color:#f0f0f0;transform:scaleX(1.0166);">Zoom X</span>
<div class="b" style="left:954.00px;top:453.50px;width:144.00px;height:2.00px;background:#f4f4f4;border-radius:1px;"></div>
<div class="b" style="left:953.9px;top:447.9px;width:13.2px;height:13.2px;border-radius:50%;background:radial-gradient(circle at 45% 30%,#dcdcdc 0%,#a6a6a6 45%,#5c5c5c 100%);"></div>
<span class="t" style="left:958.60px;top:480.71px;font-size:11.8px;color:#f0f0f0;transform:scaleX(0.9744);">x-Axis</span>
<div class="rd" style="left:965.4px;top:499.9px;width:10.8px;height:10.8px;"></div>
<span class="t" style="left:982.90px;top:500.21px;font-size:11.8px;color:#f0f0f0;transform:scaleX(0.9540);">Samples</span>
<div class="b" style="left:965.4px;top:519.9px;width:10.8px;height:10.8px;border-radius:50%;background:#111;border:2.6px solid #f0f0f0;"></div>
<span class="t" style="left:982.90px;top:520.21px;font-size:11.8px;color:#f0f0f0;transform:scaleX(0.9736);">Distance</span>
<div class="rd" style="left:965.4px;top:540.0px;width:10.8px;height:10.8px;"></div>
<span class="t" style="left:982.90px;top:540.31px;font-size:11.8px;color:#f0f0f0;transform:scaleX(0.9735);">Time</span>
<div class="b" style="left:943.50px;top:626.00px;width:900.50px;height:4.60px;background:#8f8f8f;"></div>
<svg width="1844" height="626" viewBox="0 0 1844 626" style="left:0;top:0;pointer-events:none">
<path d="M1179.5 576.3H1844 M1179.5 558.4H1844 M1179.5 540.6H1844 M1179.5 522.8H1844 M1179.5 504.9H1844 M1179.5 487.0H1844 M1179.5 469.2H1844 M1179.5 451.3H1844 M1179.5 433.5H1844 M1179.5 415.6H1844 M1179.5 397.8H1844 M1179.5 379.9H1844 M1179.5 362.1H1844 M1179.5 344.2H1844 M1179.5 326.4H1844 M1213.3 326.4V581.6 M1262.0 326.4V581.6 M1310.7 326.4V581.6 M1359.4 326.4V581.6 M1408.1 326.4V581.6 M1456.8 326.4V581.6 M1505.5 326.4V581.6 M1554.2 326.4V581.6 M1602.9 326.4V581.6 M1651.6 326.4V581.6 M1700.4 326.4V581.6 M1749.1 326.4V581.6 M1797.8 326.4V581.6 M1179.5 326.4V576.8" stroke="#8c8c8c" stroke-width="1.1" fill="none"/>
<path d="M1179.5 476.4 L1180.6 466.3 L1181.7 475.3 L1182.9 462.6 L1184.0 469.1 L1185.1 479.8 L1186.2 450.3 L1187.3 474.9 L1188.5 479.0 L1189.6 464.1 L1190.7 455.5 L1191.8 488.3 L1192.9 489.4 L1194.1 477.2 L1195.2 470.2 L1196.3 472.6 L1197.4 457.9 L1198.5 474.9 L1199.7 475.4 L1200.8 460.8 L1201.9 463.6 L1203.0 477.4 L1204.1 462.2 L1205.3 460.1 L1206.4 471.1 L1207.5 470.2 L1208.6 458.6 L1209.7 495.4 L1210.9 458.6 L1212.0 469.4 L1213.1 463.9 L1214.2 466.9 L1215.3 466.6 L1216.5 476.3 L1217.6 460.1 L1218.7 467.1 L1219.8 460.4 L1220.9 463.3 L1222.1 465.3 L1223.2 460.7 L1224.3 471.2 L1225.4 459.3 L1226.5 461.0 L1227.7 471.9 L1228.8 469.1 L1229.9 462.7 L1231.0 469.6 L1232.1 478.8 L1233.3 473.7 L1234.4 464.9 L1235.5 460.7 L1236.6 463.9 L1237.7 474.5 L1238.9 468.7 L1240.0 479.3 L1241.1 462.0 L1242.2 461.0 L1243.3 470.8 L1244.5 461.7 L1245.6 468.5 L1246.7 447.8 L1247.8 444.9 L1248.9 466.1 L1250.1 467.4 L1251.2 471.2 L1252.3 468.8 L1253.4 465.2 L1254.5 476.9 L1255.7 479.7 L1256.8 473.0 L1257.9 484.6 L1259.0 471.8 L1260.1 452.1 L1261.3 461.2 L1262.4 450.0 L1263.5 478.6 L1264.6 476.2 L1265.7 474.5 L1266.9 461.2 L1268.0 473.3 L1269.1 473.6 L1270.2 468.1 L1271.3 477.8 L1272.5 469.0 L1273.6 459.2 L1274.7 464.9 L1275.8 450.6 L1276.9 459.0 L1278.1 473.1 L1279.2 469.5 L1280.3 462.5 L1281.4 470.3 L1282.5 479.5 L1283.7 470.4 L1284.8 471.6 L1285.9 462.5 L1287.0 474.6 L1288.1 462.4 L1289.3 470.1 L1290.4 471.7 L1291.5 466.4 L1292.6 478.1 L1293.7 469.4 L1294.9 460.8 L1296.0 466.5 L1297.1 465.6 L1298.2 464.9 L1299.3 474.7 L1300.5 471.6 L1301.6 462.2 L1302.7 447.7 L1303.8 473.2 L1304.9 476.8 L1306.1 478.2 L1307.2 459.7 L1308.3 489.1 L1309.4 464.8 L1310.5 472.7 L1311.7 465.3 L1312.8 459.5 L1313.9 474.5 L1315.0 476.6 L1316.1 475.6 L1317.3 474.0 L1318.4 459.8 L1319.5 470.6 L1320.6 473.9 L1321.7 471.7 L1322.9 475.9 L1324.0 479.2 L1325.1 459.9 L1326.2 479.5 L1327.3 479.1 L1328.5 464.9 L1329.6 479.7 L1330.7 477.9 L1331.8 470.2 L1332.9 489.0 L1334.1 462.3 L1335.2 478.9 L1336.3 471.3 L1337.4 475.1 L1338.5 461.8 L1339.7 446.6 L1340.8 478.2 L1341.9 463.9 L1343.0 458.6 L1344.1 466.9 L1345.3 463.1 L1346.4 462.9 L1347.5 464.0 L1348.6 457.7 L1349.7 461.6 L1350.9 454.4 L1352.0 449.8 L1353.1 448.7 L1354.2 449.8 L1355.3 444.8 L1356.5 432.7 L1357.6 387.2 L1358.6 335.0 L1358.7 341.4 L1359.8 396.3 L1360.9 414.8 L1362.1 416.7 L1363.2 425.9 L1364.3 420.6 L1365.4 425.2 L1366.5 420.8 L1367.7 440.2 L1368.8 441.2 L1369.9 457.9 L1371.0 453.9 L1372.1 464.9 L1373.3 461.5 L1374.4 461.5 L1375.5 459.9 L1376.6 476.1 L1377.7 462.5 L1378.9 464.7 L1380.0 452.0 L1381.1 494.1 L1382.2 468.7 L1383.3 479.0 L1384.5 470.8 L1385.6 463.4 L1386.7 466.0 L1387.8 470.7 L1388.9 469.4 L1390.1 468.4 L1391.2 479.1 L1392.3 467.3 L1393.4 464.1 L1394.5 458.6 L1395.7 456.0 L1396.8 467.5 L1397.9 458.5 L1399.0 475.0 L1400.1 462.5 L1401.3 478.7 L1402.4 461.7 L1403.5 466.3 L1404.6 459.5 L1405.7 413.0 L1406.9 368.0 L1407.2 351.4 L1408.0 386.4 L1409.1 429.5 L1410.2 461.0 L1411.3 437.0 L1412.5 472.8 L1413.6 465.0 L1414.7 466.2 L1415.8 469.9 L1416.9 460.9 L1418.1 463.3 L1419.2 466.0 L1420.3 483.6 L1421.4 465.0 L1422.5 477.3 L1423.7 449.7 L1424.8 467.2 L1425.9 469.2 L1427.0 471.9 L1428.1 466.3 L1429.3 472.5 L1430.4 466.3 L1431.5 468.9 L1432.6 447.8 L1433.7 470.2 L1434.9 467.3 L1436.0 478.1 L1437.1 476.4 L1438.2 472.9 L1439.3 465.8 L1440.5 476.7 L1441.6 461.8 L1442.7 477.5 L1443.8 477.4 L1444.9 463.6 L1446.1 464.9 L1447.2 478.1 L1448.3 474.9 L1449.4 441.2 L1450.5 406.5 L1451.6 368.5 L1451.7 371.4 L1452.8 410.4 L1453.9 444.8 L1455.0 470.0 L1456.1 453.9 L1457.3 462.8 L1458.4 438.4 L1459.5 463.1 L1460.6 479.9 L1461.7 465.7 L1462.9 471.6 L1464.0 478.8 L1465.1 478.0 L1466.2 462.9 L1467.3 476.7 L1468.5 477.5 L1469.6 470.4 L1470.7 471.9 L1471.8 470.8 L1472.9 466.5 L1474.1 468.0 L1475.2 475.7 L1476.3 473.4 L1477.4 475.9 L1478.5 470.8 L1479.7 479.2 L1480.8 461.3 L1481.9 465.6 L1483.0 466.0 L1484.1 464.1 L1485.3 471.9 L1486.4 467.2 L1487.5 465.1 L1488.6 472.9 L1489.7 477.4 L1490.9 463.4 L1492.0 459.3 L1493.1 474.6 L1494.2 472.9 L1495.3 471.1 L1496.5 466.5 L1497.6 474.2 L1498.7 466.8 L1499.8 463.0 L1500.9 460.8 L1502.1 459.0 L1503.2 464.9 L1504.3 459.1 L1505.4 470.7 L1506.5 485.6 L1507.7 468.7 L1508.8 470.2 L1509.9 478.9 L1511.0 477.5 L1512.1 473.6 L1513.3 464.7 L1514.4 471.5 L1515.5 477.4 L1516.6 464.9 L1517.7 458.9 L1518.9 466.5 L1520.0 464.9 L1521.1 477.0 L1522.2 459.9 L1523.3 466.4 L1524.5 473.9 L1525.6 479.8 L1526.7 476.3 L1527.8 458.2 L1528.9 476.2 L1530.1 468.0 L1531.2 461.8 L1532.3 476.3 L1533.4 477.8 L1534.5 473.3 L1535.7 475.3 L1536.8 463.0 L1537.9 463.9 L1539.0 474.7 L1540.1 473.4 L1541.3 461.2 L1542.4 478.1 L1543.5 460.2 L1544.6 465.1 L1545.7 475.9 L1546.9 458.9 L1548.0 444.3 L1549.1 469.5 L1550.2 476.3 L1551.3 477.3 L1552.5 453.4 L1553.6 476.9 L1554.7 447.4 L1555.8 459.2 L1556.9 467.6 L1558.1 466.9 L1559.2 470.5 L1560.3 475.9 L1561.4 463.6 L1562.5 478.4 L1563.7 476.5 L1564.8 473.2 L1565.9 472.4 L1567.0 477.4 L1568.1 469.2 L1569.3 474.8 L1570.4 473.7 L1571.5 465.8 L1572.6 463.4 L1573.7 473.2 L1574.9 463.9 L1576.0 463.8 L1577.1 460.0 L1578.2 465.5 L1579.3 468.6 L1580.5 477.9 L1581.6 474.2 L1582.7 470.8 L1583.8 474.6 L1584.9 461.4 L1586.1 477.2 L1587.2 459.2 L1588.3 468.4 L1589.4 469.0 L1590.5 459.1 L1591.7 474.8 L1592.8 470.9 L1593.9 465.5 L1595.0 465.1 L1596.1 479.6 L1597.3 471.8 L1598.4 465.5 L1599.5 460.0 L1600.6 461.5 L1601.7 467.3 L1602.9 478.6 L1604.0 471.9 L1605.1 455.1 L1606.2 459.4 L1607.3 475.9 L1608.5 462.8 L1609.6 463.4 L1610.7 467.2 L1611.8 446.4 L1612.9 461.7 L1614.1 461.5 L1615.2 476.3 L1616.3 462.3 L1617.4 488.5 L1618.5 467.4 L1619.7 470.3 L1620.8 459.3 L1621.9 465.5 L1623.0 468.9 L1624.1 477.5 L1625.3 477.4 L1626.4 465.9 L1627.5 462.9 L1628.6 478.1 L1629.7 471.3 L1630.9 459.0 L1632.0 474.5 L1633.1 469.2 L1634.2 477.7 L1635.3 465.9 L1636.5 463.6 L1637.6 462.7 L1638.7 449.0 L1639.8 464.7 L1640.9 469.8 L1642.1 462.9 L1643.2 463.2 L1644.3 463.3 L1645.4 472.6 L1646.5 460.5 L1647.7 472.2 L1648.8 463.7 L1649.9 470.4 L1651.0 478.0 L1652.1 465.7 L1653.3 459.6 L1654.4 463.0 L1655.5 472.9 L1656.6 474.4 L1657.7 476.9 L1658.9 460.0 L1660.0 466.4 L1661.1 459.2 L1662.2 469.4 L1663.3 481.0 L1664.5 471.4 L1665.6 459.3 L1666.7 471.0 L1667.8 474.0 L1668.9 476.3 L1670.1 478.8 L1671.2 467.1 L1672.3 467.8 L1673.4 488.3 L1674.5 474.1 L1675.7 460.2 L1676.8 462.1 L1677.9 469.5 L1679.0 472.5 L1680.1 469.7 L1681.3 479.4 L1682.4 477.2 L1683.5 468.1 L1684.6 473.2 L1685.7 464.7 L1686.9 467.5 L1688.0 450.0 L1689.1 473.3 L1690.2 477.1 L1691.3 465.9 L1692.5 461.7 L1693.6 468.7 L1694.7 459.0 L1695.8 465.0 L1696.9 462.9 L1698.1 469.7 L1699.2 474.5 L1700.3 466.3 L1701.4 474.7 L1702.5 488.4 L1703.7 466.0 L1704.8 473.4 L1705.9 469.6 L1707.0 470.6 L1708.1 479.0 L1709.3 465.8 L1710.4 460.2 L1711.5 475.6 L1712.6 461.6 L1713.7 472.9 L1714.9 470.9 L1716.0 473.5 L1717.1 475.5 L1718.2 476.0 L1719.3 472.6 L1720.5 461.1 L1721.6 468.6 L1722.7 467.5 L1723.8 466.1 L1724.9 461.9 L1726.1 467.6 L1727.2 476.6 L1728.3 470.2 L1729.4 462.1 L1730.5 470.6 L1731.7 476.7 L1732.8 455.7 L1733.9 459.7 L1735.0 470.8 L1736.1 459.9 L1737.3 479.5 L1738.4 469.8 L1739.5 478.5 L1740.6 464.3 L1741.7 476.1 L1742.9 470.6 L1744.0 469.5 L1745.1 468.9 L1746.2 462.5 L1747.3 469.4 L1748.5 453.6 L1749.6 462.6 L1750.7 461.5 L1751.8 458.6 L1752.9 447.0 L1754.1 467.7 L1755.2 468.8 L1756.3 471.9 L1757.4 462.8 L1758.5 479.5 L1759.7 479.9 L1760.8 477.5 L1761.9 476.3 L1763.0 478.4 L1764.1 465.0 L1765.3 478.4 L1766.4 471.4 L1767.5 470.1 L1768.6 460.8 L1769.7 482.5 L1770.9 460.6 L1772.0 463.2 L1773.1 458.7 L1774.2 466.1 L1775.3 463.2 L1776.5 466.6 L1777.6 458.7 L1778.7 477.9 L1779.8 472.3 L1780.9 464.6 L1782.1 467.9 L1783.2 473.4 L1784.3 470.6 L1785.4 477.1 L1786.5 466.3 L1787.7 478.2 L1788.8 462.7 L1789.9 464.6 L1791.0 478.0 L1792.1 473.2 L1793.3 463.6 L1794.4 461.6 L1795.5 475.8 L1796.6 470.6 L1797.7 464.4 L1798.9 462.5 L1800.0 481.9 L1801.1 475.6 L1802.2 477.1 L1803.3 467.1 L1804.5 477.4 L1805.6 487.2 L1806.7 472.2 L1807.8 473.8 L1808.9 474.0 L1810.1 478.4 L1811.2 467.1 L1812.3 473.0 L1813.4 478.6 L1814.5 470.6 L1815.7 470.7 L1816.8 465.9 L1817.9 468.1 L1819.0 466.7 L1820.1 465.9 L1821.3 462.9 L1822.4 474.9 L1823.5 470.4 L1824.6 470.2 L1825.7 459.5 L1826.9 483.1 L1828.0 465.5 L1829.1 458.9 L1830.2 459.7 L1831.3 477.8 L1832.5 468.6 L1833.6 469.9 L1834.7 463.1 L1835.8 470.5 L1836.9 466.6 L1838.1 459.6 L1839.2 466.4 L1840.3 462.1 L1841.4 468.7 L1842.5 459.1 L1843.7 477.0 L1844.8 460.6 L1845.9 476.9" stroke="#d6d625" stroke-width="1.5" fill="none" stroke-linejoin="round"/>
<rect x="1272" y="326.4" width="86.9" height="249.9" fill="rgba(140,140,140,0.5)"/>
<path d="M1381.8 351H1435.7" stroke="#e6e620" stroke-width="1.2"/>
<path d="M1402.3 368.5H1503" stroke="#e01818" stroke-width="1.2"/>
<path d="M1451.6 368.5V576" stroke="#9a9a9a" stroke-width="0.9"/>
<text x="1356.0" y="338.9" font-size="21.4" fill="#efefef" text-anchor="middle" textLength="42.6" lengthAdjust="spacingAndGlyphs">41.8</text>
<text x="1407.5" y="356.9" font-size="21.4" fill="#efefef" text-anchor="middle" textLength="41.0" lengthAdjust="spacingAndGlyphs">41.1</text>
<text x="1452.0" y="372.3" font-size="21.4" fill="#efefef" text-anchor="middle" textLength="41.0" lengthAdjust="spacingAndGlyphs">41.7</text>
<circle cx="1356.4" cy="333" r="2.7" fill="#f2f220"/><circle cx="1407.4" cy="351" r="2.7" fill="#f2f220"/><circle cx="1451.6" cy="368.4" r="2.7" fill="#f01818"/>
<path d="M1403.6 572.2H1412.6L1408.1 576.6Z" fill="#f2f220"/><path d="M1447.2 572.2H1456.2L1451.7 576.6Z" fill="#f01818"/>
<text x="1168.5" y="583.5" font-size="21.4" fill="#efefef" text-anchor="end" textLength="29.5" lengthAdjust="spacingAndGlyphs">0.0</text>
<text x="1168.5" y="547.8" font-size="21.4" fill="#efefef" text-anchor="end" textLength="40.2" lengthAdjust="spacingAndGlyphs">10.0</text>
<text x="1168.5" y="512.1" font-size="21.4" fill="#efefef" text-anchor="end" textLength="40.2" lengthAdjust="spacingAndGlyphs">20.0</text>
<text x="1168.5" y="476.4" font-size="21.4" fill="#efefef" text-anchor="end" textLength="40.2" lengthAdjust="spacingAndGlyphs">30.0</text>
<text x="1168.5" y="440.7" font-size="21.4" fill="#efefef" text-anchor="end" textLength="40.2" lengthAdjust="spacingAndGlyphs">40.0</text>
<text x="1168.5" y="405.0" font-size="21.4" fill="#efefef" text-anchor="end" textLength="40.2" lengthAdjust="spacingAndGlyphs">50.0</text>
<text x="1168.5" y="369.3" font-size="21.4" fill="#efefef" text-anchor="end" textLength="40.2" lengthAdjust="spacingAndGlyphs">60.0</text>
<text x="1168.5" y="333.6" font-size="21.4" fill="#efefef" text-anchor="end" textLength="40.2" lengthAdjust="spacingAndGlyphs">70.0</text>
<text x="1211.1" y="602.3" font-size="21.4" fill="#efefef" text-anchor="middle" textLength="30.5" lengthAdjust="spacingAndGlyphs">-60</text>
<text x="1259.8" y="602.3" font-size="21.4" fill="#efefef" text-anchor="middle" textLength="30.5" lengthAdjust="spacingAndGlyphs">-40</text>
<text x="1308.5" y="602.3" font-size="21.4" fill="#efefef" text-anchor="middle" textLength="30.5" lengthAdjust="spacingAndGlyphs">-20</text>
<text x="1359.4" y="602.3" font-size="21.4" fill="#efefef" text-anchor="middle" textLength="11.5" lengthAdjust="spacingAndGlyphs">0</text>
<text x="1408.1" y="602.3" font-size="21.4" fill="#efefef" text-anchor="middle" textLength="23.5" lengthAdjust="spacingAndGlyphs">20</text>
<text x="1456.8" y="602.3" font-size="21.4" fill="#efefef" text-anchor="middle" textLength="23.5" lengthAdjust="spacingAndGlyphs">40</text>
<text x="1505.5" y="602.3" font-size="21.4" fill="#efefef" text-anchor="middle" textLength="23.5" lengthAdjust="spacingAndGlyphs">60</text>
<text x="1554.2" y="602.3" font-size="21.4" fill="#efefef" text-anchor="middle" textLength="23.5" lengthAdjust="spacingAndGlyphs">80</text>
<text x="1602.9" y="602.3" font-size="21.4" fill="#efefef" text-anchor="middle" textLength="35.5" lengthAdjust="spacingAndGlyphs">100</text>
<text x="1651.6" y="602.3" font-size="21.4" fill="#efefef" text-anchor="middle" textLength="35.5" lengthAdjust="spacingAndGlyphs">120</text>
<text x="1700.4" y="602.3" font-size="21.4" fill="#efefef" text-anchor="middle" textLength="35.5" lengthAdjust="spacingAndGlyphs">140</text>
<text x="1749.1" y="602.3" font-size="21.4" fill="#efefef" text-anchor="middle" textLength="35.5" lengthAdjust="spacingAndGlyphs">160</text>
<text x="1797.8" y="602.3" font-size="21.4" fill="#efefef" text-anchor="middle" textLength="35.5" lengthAdjust="spacingAndGlyphs">180</text>
<text x="1846.5" y="602.3" font-size="21.4" fill="#efefef" text-anchor="middle" textLength="35.5" lengthAdjust="spacingAndGlyphs">200</text>
<text x="1392.2" y="612.6" font-size="15.4" fill="#d8d8d8" text-anchor="start" textLength="30.6" lengthAdjust="spacingAndGlyphs">20,5</text>
<text x="1436.6" y="612.6" font-size="15.4" fill="#d8d8d8" text-anchor="start" textLength="30.6" lengthAdjust="spacingAndGlyphs">38,6</text>
<text x="1539.5" y="622.0" font-size="21.4" fill="#efefef" text-anchor="middle" textLength="231.5" lengthAdjust="spacingAndGlyphs">Distance Difference (km)</text>
<text transform="translate(1134.3,451) rotate(-90)" font-size="21.4" fill="#efefef" text-anchor="middle" textLength="148" lengthAdjust="spacingAndGlyphs">Magnitude (dB)</text>
</svg>
<div class="b" style="left:943.50px;top:630.60px;width:900.50px;height:19.90px;background:#0f2d50;"></div>
<div class="b" style="left:943.50px;top:650.50px;width:900.50px;height:100.50px;background:#000;"></div>
<span class="t" style="left:1375.30px;top:633.48px;font-size:14.2px;color:#fff;transform:scaleX(1.0551);">Audio Spectrum</span>
<div class="b" style="left:948.70px;top:661.20px;width:167.70px;height:50.60px;background:#333333;border-radius:5px;"></div>
<span class="t" style="left:957.50px;top:656.86px;font-size:12.8px;color:#f0f0f0;transform:scaleX(0.9904);">Flags</span>
<div class="rd" style="left:964.6px;top:682.0px;width:13.2px;height:13.2px;"></div>
<span class="t" style="left:981.70px;top:684.41px;font-size:11.8px;color:#f0f0f0;transform:scaleX(0.9149);">Freeze</span>
<div class="rd" style="left:1042.7px;top:682.0px;width:13.2px;height:13.2px;"></div>
<span class="t" style="left:1059.70px;top:684.41px;font-size:11.8px;color:#f0f0f0;">Gradient</span>
<div class="b" style="left:948.70px;top:732.70px;width:167.70px;height:18.30px;background:#333333;border-radius:5px 5px 0 0;"></div>
<span class="t" style="left:957.50px;top:728.16px;font-size:12.8px;color:#f0f0f0;transform:scaleX(1.0639);">Line Plot</span>
<div class="b" style="left:1127.80px;top:652.60px;width:4.50px;height:98.40px;background:#b8b8b8;border-radius:2.5px 2.5px 0 0;"></div>
<svg width="1844" height="751" viewBox="0 0 1844 751" style="left:0;top:0;pointer-events:none">
<path d="M1209.6 661.6H1844 M1209.6 677.0H1844 M1209.6 692.3H1844 M1209.6 707.6H1844 M1209.6 723.0H1844 M1209.6 738.4H1844 M1209.6 753.7H1844 M1267.2 661.6V751 M1325.7 661.6V751 M1384.2 661.6V751 M1442.7 661.6V751 M1501.2 661.6V751 M1559.7 661.6V751 M1618.2 661.6V751 M1676.7 661.6V751 M1735.2 661.6V751 M1793.7 661.6V751 M1209.6 661.6V751" stroke="#8c8c8c" stroke-width="1.1" fill="none"/>
<path d="M1210.9 751V684.8" stroke="#d6d625" stroke-width="1.2" fill="none"/>
<path d="M1246.0 750.7 L1247.4 750.5 L1248.8 750.5 L1250.2 751.3 L1251.6 750.3 L1253.0 745.6 L1254.4 748.5 L1255.8 748.0 L1257.2 751.4 L1258.6 751.1 L1260.0 746.5 L1261.4 746.3 L1262.8 747.5 L1264.2 751.5 L1265.6 750.1 L1267.0 750.2 L1268.4 751.1 L1269.8 750.8 L1271.2 751.2 L1272.6 750.6 L1274.0 745.7 L1275.4 749.2 L1276.8 750.6 L1278.2 751.1 L1279.6 751.5 L1281.0 749.3 L1282.4 746.2 L1283.8 749.4" stroke="#d6d625" stroke-width="1.2" fill="none"/>
<text x="1198.7" y="668.8" font-size="21.4" fill="#efefef" text-anchor="end" textLength="36.2" lengthAdjust="spacingAndGlyphs">-5.0</text>
<text x="1198.7" y="713.2" font-size="21.4" fill="#efefef" text-anchor="end" textLength="47.8" lengthAdjust="spacingAndGlyphs">-20.0</text>
<text x="1198.7" y="757.6" font-size="21.4" fill="#efefef" text-anchor="end" textLength="47.8" lengthAdjust="spacingAndGlyphs">-35.0</text>
<text transform="translate(1163,765) rotate(-90)" font-size="21.4" fill="#efefef" text-anchor="middle" textLength="148" lengthAdjust="spacingAndGlyphs">Magnitude (dB)</text>
</svg>
</body></html>
